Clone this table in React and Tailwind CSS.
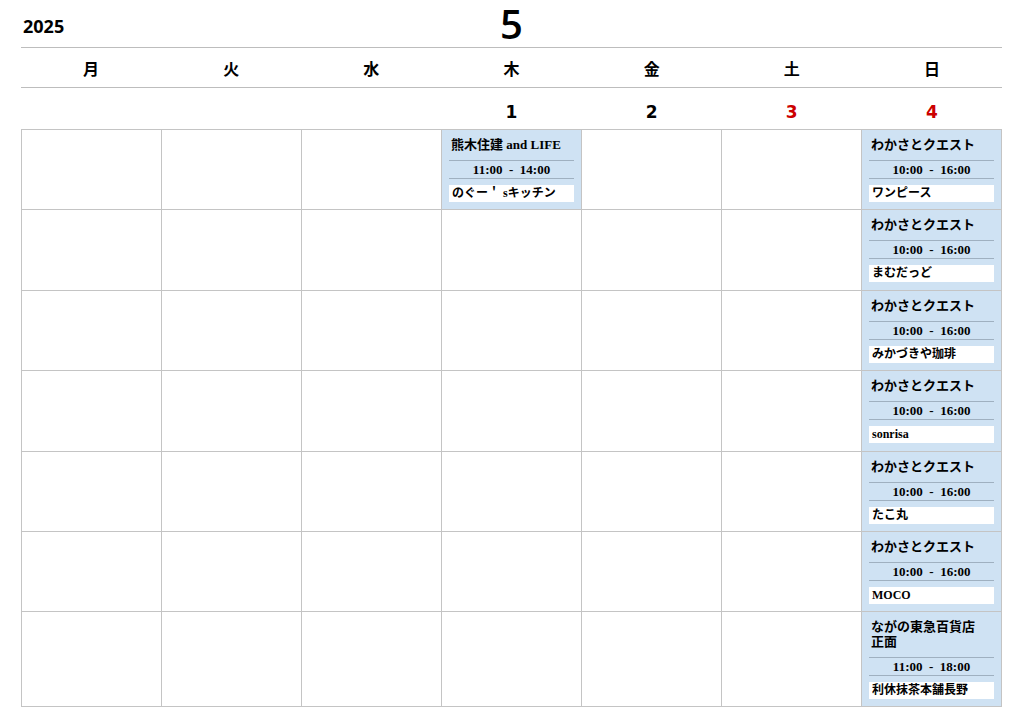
const days = ["月", "火", "水", "木", "金", "土", "日"];

const dates = [
  { n: "", red: false },
  { n: "", red: false },
  { n: "", red: false },
  { n: "1", red: false },
  { n: "2", red: false },
  { n: "3", red: true },
  { n: "4", red: true },
];

const sunday = [
  { title: "わかさとクエスト", time: "10:00 - 16:00", shop: "ワンピース" },
  { title: "わかさとクエスト", time: "10:00 - 16:00", shop: "まむだっど" },
  { title: "わかさとクエスト", time: "10:00 - 16:00", shop: "みかづきや珈琲" },
  { title: "わかさとクエスト", time: "10:00 - 16:00", shop: "sonrisa" },
  { title: "わかさとクエスト", time: "10:00 - 16:00", shop: "たこ丸" },
  { title: "わかさとクエスト", time: "10:00 - 16:00", shop: "MOCO" },
  { title: "ながの東急百貨店\n正面", time: "11:00 - 18:00", shop: "利休抹茶本舗長野" },
];

const thursday = { title: "熊木住建 and LIFE", time: "11:00 - 14:00", shop: "のぐー＇ sキッチン" };

function EventCell({ ev }) {
  return (
    <div className="bg-[#cfe2f3] px-[7px] pt-[7px] pb-[7px] h-full">
      <div className="text-[13px] leading-[15px] font-bold pb-2 px-[2px] whitespace-pre-line border-b border-[#9fb0c0]">
        {ev.title}
      </div>
      <div className="text-[13px] leading-[17px] font-bold text-center whitespace-pre border-b border-[#9fb0c0]">
        {ev.time.replace(" - ", "  -  ")}
      </div>
      <div className="mt-[6px] bg-white h-[17px] leading-[17px] text-[12px] font-bold px-[3px] whitespace-nowrap overflow-hidden">
        {ev.shop}
      </div>
    </div>
  );
}

export default function App() {
  const font = { fontFamily: '"Open Sans", "Noto Sans CJK JP", sans-serif' };
  return (
    <div className="w-[1024px] h-[724px] bg-white text-black overflow-hidden">
      <div className="mx-[21px] w-[981px]">
        {/* header */}
        <div className="grid grid-cols-3 items-end h-[48px] border-b border-[#bdbdbd]">
          <div
            className="text-[18px] font-bold leading-[20px] pb-[11px] pl-[2px]"
            style={font}
          >
            2025
          </div>
          <div
            className="text-[40px] leading-[46px] text-center font-semibold"
            style={font}
          >
            5
          </div>
          <div />
        </div>

        {/* weekdays */}
        <div
          className="grid grid-cols-7 h-[40px] items-center border-b border-[#bdbdbd]"
          style={{ fontFamily: '"Noto Sans CJK JP", sans-serif' }}
        >
          {days.map((d) => (
            <div key={d} className="text-center text-[16px] font-bold">
              {d}
            </div>
          ))}
        </div>

        {/* dates */}
        <div
          className="grid grid-cols-7 h-[41px] items-center pt-[8px]"
          style={{ fontFamily: '"DejaVu Sans", sans-serif' }}
        >
          {dates.map((d, i) => (
            <div
              key={i}
              className={`text-center text-[17px] font-bold ${
                d.red ? "text-[#cc0000]" : "text-black"
              }`}
            >
              {d.n}
            </div>
          ))}
        </div>

        {/* calendar grid */}
        <div
          className="grid grid-cols-7 border-t border-l border-[#c4c4c4]"
          style={{ fontFamily: '"Liberation Serif", "Noto Sans CJK JP", serif' }}
        >
          {sunday.map((ev, r) =>
            days.map((d, c) => {
              let cell = null;
              if (c === 6) cell = <EventCell ev={ev} />;
              if (c === 3 && r === 0) cell = <EventCell ev={thursday} />;
              return (
                <div
                  key={r + "-" + c}
                  className="min-h-[80.4px] border-r border-b border-[#c4c4c4]"
                >
                  {cell}
                </div>
              );
            })
          )}
        </div>
      </div>
    </div>
  );
}
